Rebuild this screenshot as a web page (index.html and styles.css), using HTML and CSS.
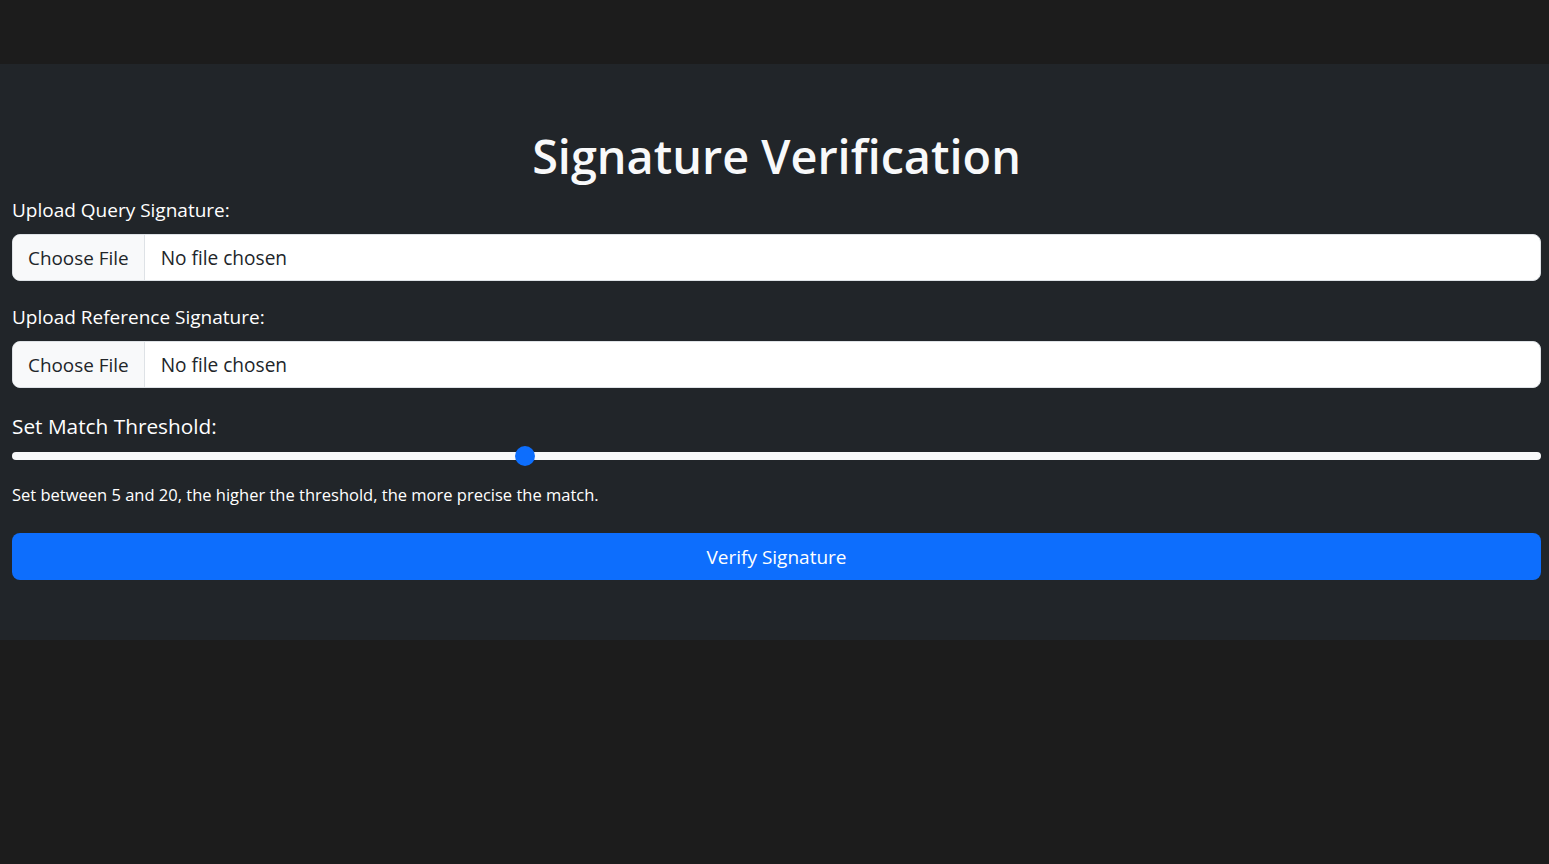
FILE: index.html
```html
<!DOCTYPE html>
<html lang="en">
<head>
<meta charset="utf-8">
<title>Signature Verification</title>
<link rel="stylesheet" href="styles.css">
</head>
<body>
<main class="panel">
  <h1 class="title">Signature Verification</h1>
  <form class="form">
    <div class="field">
      <label class="label" for="query">Upload Query Signature:</label>
      <input class="file" type="file" id="query">
    </div>
    <div class="field">
      <label class="label" for="ref">Upload Reference Signature:</label>
      <input class="file" type="file" id="ref">
    </div>
    <div class="field field-range">
      <label class="label label-lg" for="thr">Set Match Threshold:</label>
      <input class="range" type="range" id="thr" min="5" max="20" value="10">
      <p class="help">Set between 5 and 20, the higher the threshold, the more precise the match.</p>
    </div>
    <button class="btn" type="button">Verify Signature</button>
  </form>
</main>
</body>
</html>
```

FILE: styles.css
```css
* { box-sizing: border-box; }
html, body { margin: 0; padding: 0; }
body {
  background: #1c1c1c;
  color: #fff;
  font-family: "Open Sans", "Noto Sans", sans-serif;
  min-height: 864px;
}
.panel {
  margin-top: 64px;
  background: #212529;
  height: 576px;
  padding: 63px 8px 0 12px;
}
.title {
  margin: 0 0 12px;
  text-align: center;
  font-size: 46.8px;
  font-weight: 600;
  line-height: 58px;
  color: #f8f9fa;
}
.form { display: flex; flex-direction: column; }
.field { display: flex; flex-direction: column; margin-bottom: 23px; }
.label {
  font-size: 19px;
  line-height: 26px;
  margin-bottom: 11px;
}
.label-lg { font-size: 20.8px; line-height: 30px; margin-bottom: 3px; }
.file {
  display: block;
  width: 100%;
  height: 47px;
  font-family: inherit;
  font-size: 19.1px;
  color: #212529;
  background: #fff;
  border: 1px solid #dee2e6;
  border-radius: 8px;
  overflow: hidden;
  padding: 0 16px 0 0;
}
.file::file-selector-button {
  font-family: inherit;
  font-size: 18.9px;
  color: #212529;
  background: #f8f9fa;
  border: 0;
  border-right: 1px solid #dee2e6;
  height: 45px;
  padding: 0 15px 0 15px;
  margin: 0 16px 0 0;
}
.range {
  -webkit-appearance: none;
  appearance: none;
  width: 100%;
  height: 16px;
  margin: 4px 0 0;
  padding: 0;
  background: transparent;
}
.range::-webkit-slider-runnable-track {
  height: 8px;
  border-radius: 8px;
  background: #f8f9fa;
}
.range::-webkit-slider-thumb {
  -webkit-appearance: none;
  appearance: none;
  width: 20px;
  height: 20px;
  margin-top: -6px;
  border-radius: 50%;
  background: #0d6efd;
  border: 0;
}
.help {
  margin: 19px 0 0;
  font-size: 16.5px;
  line-height: 24px;
}
.field-range { margin-bottom: 26px; }
.btn {
  display: block;
  width: 100%;
  height: 47px;
  background: #0d6efd;
  color: #fff;
  border: 0;
  border-radius: 8px;
  font-family: inherit;
  font-size: 19px;
}
```
